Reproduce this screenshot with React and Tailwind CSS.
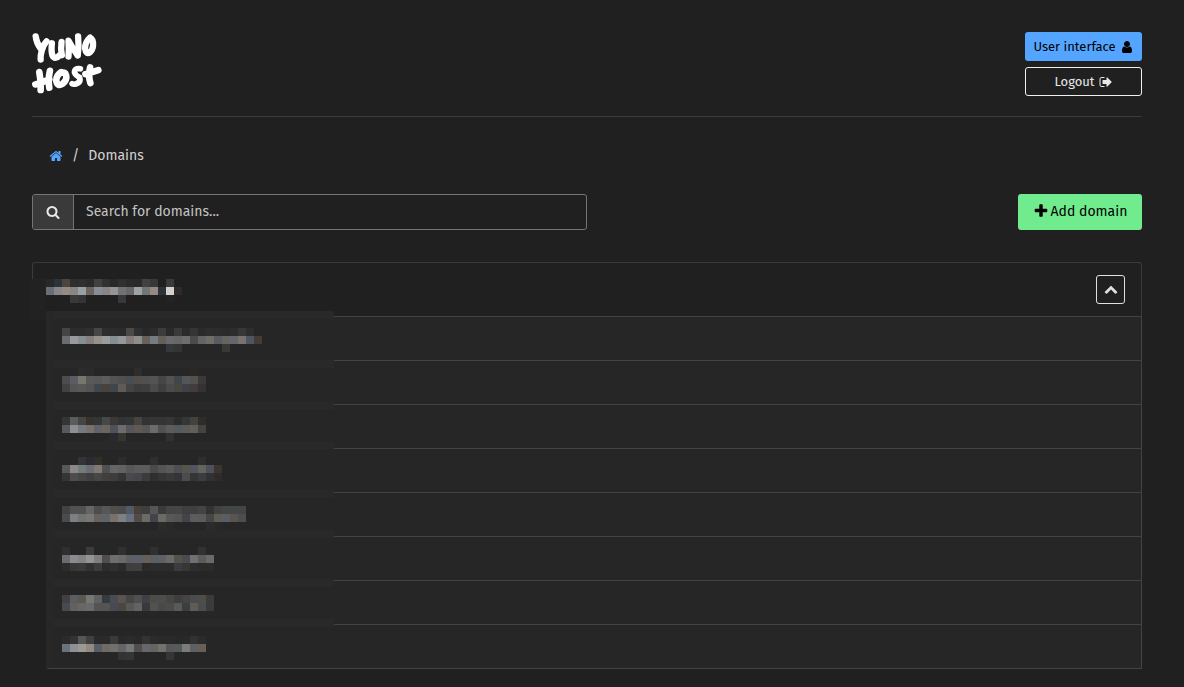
import clsx from 'clsx';

const ICONS = {
  home: 'M1472 992v480q0 26-19 45t-45 19h-384v-384h-256v384h-384q-26 0-45-19t-19-45v-480q0-1 .5-3t.5-3l575-474 575 474q1 2 1 6zm223-69l-62 74q-8 9-21 11h-3q-13 0-21-7l-692-577-692 577q-12 8-24 7-13-2-21-11l-62-74q-8-10-7-23.5t11-21.5l719-599q32-26 76-26t76 26l244 204v-195q0-14 9-23t23-9h192q14 0 23 9t9 23v408l219 182q10 8 11 21.5t-7 23.5z',
  search: 'M1216 832q0-185-131.500-316.500t-316.500-131.500-316.500 131.500-131.500 316.500 131.500 316.500 316.500 131.500 316.500-131.500 131.500-316.500zm512 832q0 52-38 90t-90 38q-54 0-90-38l-343-342q-179 124-399 124-143 0-273.500-55.500t-225-150-150-225-55.500-273.500 55.500-273.500 150-225 225-150 273.500-55.500 273.500 55.500 225 150 150 225 55.500 273.500q0 220-124 399l343 343q37 37 37 90z',
  plus: 'M1600 736v192q0 40-28 68t-68 28h-416v416q0 40-28 68t-68 28h-192q-40 0-68-28t-28-68v-416h-416q-40 0-68-28t-28-68v-192q0-40 28-68t68-28h416v-416q0-40 28-68t68-28h192q40 0 68 28t28 68v416h416q40 0 68 28t28 68z',
  chevronUp: 'M1683 1331l-166 165q-19 19-45 19t-45-19l-531-531-531 531q-19 19-45 19t-45-19l-166-165q-19-19-19-45.500t19-45.500l742-741q19-19 45-19t45 19l742 741q19 19 19 45.500t-19 45.500z',
  user: 'M1536 1399q0 109-62.500 187t-150.500 78h-854q-88 0-150.500-78t-62.500-187q0-85 8.500-160.500t31.500-152 58.500-131 94-89 134.500-34.500q131 128 313 128t313-128q76 0 134.500 34.500t94 89 58.500 131 31.500 152 8.500 160.500zm-256-887q0 159-112.500 271.500t-271.500 112.500-271.500-112.500-112.500-271.500 112.500-271.500 271.500-112.500 271.500 112.500 112.500 271.500z',
  signOut: 'M704 1440q0 4 1 20t.5 26.500-3 23.500-10 19.500-20.500 6.500h-320q-119 0-203.500-84.500t-84.500-203.500v-704q0-119 84.500-203.500t203.500-84.500h320q13 0 22.500 9.500t9.500 22.500q0 4 1 20t.5 26.500-3 23.500-10 19.500-20.500 6.500h-320q-66 0-113 47t-47 113v704q0 66 47 113t113 47h312l11.500 1 11.500 3 8 5.500 7 9 2 13.500zm928-544q0 26-19 45l-544 544q-19 19-45 19t-45-19-19-45v-288h-448q-26 0-45-19t-19-45v-384q0-26 19-45t45-19h448v-288q0-26 19-45t45-19 45 19l544 544q19 19 19 45z',
};

const Icon = ({ name, className }) => (
  <svg viewBox="0 0 1792 1792" fill="currentColor" aria-hidden="true" className={clsx('shrink-0', className)}>
    <path d={ICONS[name]} />
  </svg>
);

// Redacted names: rows of 8px cells, '-' leaves a cell empty
const MAIN_DOMAIN = {
  y: 16,
  rows: [
    '26282a 2e3337 4a4540 2e2e2e 303031 2b2b2b 404041 313131 292929 303030 2a2b2c 2a2a2a 404141 383838 - 3b3b3b',
    '6b6e76 85868c 968a82 868686 9a9fa4 6b6560 888c94 868686 959492 707276 66676b 9fa2a5 747575 968a80 2b323b d3d2ce 2f2a27',
    '- - - 393939 343434 - - - - 37383a 231f1d - - - - 232323',
  ],
};

const SUBDOMAINS = [
  {
    band: -5,
    y: 12,
    rows: [
      '454546 2c2c2c 2c2c2c 2e2e33 474743 2d2d2d 2c2c2c 2b2b2b 4b4846 2e2f31 292929 2c2c2c 3c3c3c 2a2a2a 3a3a3a 2b2b2b 353535 2a2a2a 2d2d2d 2b2c2e 2a2c29 2b2e2d 373735 2c2d2e',
      '6b6b70 989a99 878e92 877f7e 96928a 9b9c9e 888d91 93989d 857c79 8d8e8c 67625e 757b80 645f58 696a6e 676767 6e6e6c 4b4b4b 636467 706c68 595c5e 646460 65676c 78746d 4d5661 443b33',
      '- - - - - - - - - - - - - 35373a 343434 - - - - - 383836',
    ],
  },
  {
    band: 0,
    y: 8,
    rows: [
      '- - 2b2b2b 2a2a2a - - - - - 2d2d2d - - - - - - 2a2826',
      '4d4d50 5c5c62 797670 595959 575757 5c5c5e 535353 505050 4a4e53 534e4a 4e5150 535353 464646 525252 41464a 53555a 52514d 3c3a39',
      '424244 555555 585854 535353 41464b 47423e 424549 605b57 434445 3f3b38 3e3e3e 4b4b4b 3f3f3f 4b4b4b 484742 3e4246 423d3a 333333',
    ],
  },
  {
    band: -3,
    y: 13,
    rows: [
      '353535 5b5d5d 464543 35322f 353535 46484a 3c3836 323334 353535 47443f 323334 383434 353434 363636 2c2c2c 353638 43423e 2f2c2a',
      '59595b 8d8e91 757a7e 77716d 606468 6b645f 505259 6c6d6c 55555a 605951 565656 6a6c6c 515151 5b5a5d 545a5e 5b5b5b 625f58 434341',
      '- - - - - - 292a2e 35342f - - - - - 303131',
    ],
  },
  {
    band: -7,
    y: 9,
    rows: [
      '- - 333535 2b2c31 322e2a - - 2c2e2e - - - 2e2f2f - - - - - 2b2f2e',
      '575859 8b8885 747b7c 6b6d74 807872 505050 656565 626262 575757 5c5c5c 5c5c5d 4a4a4a 545454 5a5a5a 4e4f52 57534e 52555d 64645e 4e515b 3b3530',
      '353535 4d4d4d 464646 3f4042 454645 403f3a 3d3d3e 363430 474a4e 44464a 3d3b38 2f2f2f 343536 393939 343538 4b4c4d 363534 3b3e3c 303236 302b28',
    ],
  },
  {
    band: -3,
    y: 14,
    rows: [
      '404244 515151 515151 656565 504c4b 575757 514f4c 4c4c4c 515b67 484139 3e3e40 565656 3d3a39 454545 464643 3f3f3f 3d403f 444442 33322f 414141 444645 424646 424646',
      '4b4b4b 7b8084 707371 787773 68615f 5d6469 79716c 7d8180 667080 514c47 6b6a64 43434b 6a6962 585858 555555 434449 5a5c5d 5b5b5b 464645 5e5c55 5a5d62 5b534d 4d4f4e',
      '- - - - - - - - - - - - 2b2b2b 292929 - - - - 2a2b2c 292827',
    ],
  },
  {
    band: -6,
    y: 11,
    rows: [
      '2f2f2f - - 3c3c3c - - - 303030 - - - 303030 - - - - - 303131',
      '6c6c6e 868c92 868280 969492 7e7e7e 524d4b 6e6e6e 6a6a69 5c5f64 5b5f69 655e59 5c5f62 5e6163 6a6b67 52524f 494b50 6e7073 5f5b59 6a6b68',
      '2d2d2e 383838 3d3b39 303132 3f3d3b 2c2c2e 303030 292c2b 3e3e3e 404040 2a2a2a 2c2c2c 2b2c2e 2c2c2d 3b3c42 3a3532 2c2d2e 2c2b29 2b2b2a',
    ],
  },
  {
    band: -1,
    y: 15,
    rows: [
      '414141 5a5e62 5b5852 757775 616161 363b40 4a4c53 5b5350 464644 4f4f4f 404047 4d4c48 4b4d4e 484643 3e3e3e 444444 494b4d 4d4d49 3d3b39',
      '464b50 64605d 676767 6a6a69 555353 555450 484a51 4c4640 585858 636363 39383f 505250 4a4946 4c4c4a 555a5a 3c3d3f 5e5c54 484d4d 3a3a38',
    ],
  },
  {
    band: -5,
    y: 12,
    rows: [
      '2b2b2b 333333 575650 404040 2a2a2a 2a2a2a 3a3a3a 292929 2b2b2b 292929 333333 2b2b2b 292929 292929 282828 292929 323232 2b2b2b',
      '69737b 8e9095 9a9996 918a83 585d66 706a64 70706d 646464 727778 524e4c 66676a 646461 71716e 57575a 555a5d 7b7b79 5e6066 6a5f56',
      '- - - - - - - 333333 353535 - - - - 343635',
    ],
  },
];

const Mosaic = ({ x, y, rows }) =>
  rows.map((row, r) =>
    row.split(' ').map((color, c) =>
      color === '-' ? null : (
        <rect key={`${r}-${c}`} x={x + c * 8} y={y + r * 8} width="8" height="8" fill={`#${color}`} />
      )
    )
  );

const Logo = () => (
  <svg
    viewBox="36 36 214 190"
    role="img"
    aria-label="YunoHost"
    className="w-[71px] h-[63px]"
    fill="none"
    stroke="#fff"
    strokeLinecap="round"
    strokeLinejoin="round"
  >
    <g strokeWidth="19">
      <path d="M47 49Q49 68 62 86M80 64Q68 78 65 94Q61 108 62 119" />
      <path d="M96 70Q93 94 98 108Q106 121 121 104M125 66Q122 86 126 106" />
      <path d="M146 110Q148 88 146 62Q160 88 174 107Q178 76 175 49" />
      <path d="M211 53Q196 66 196 86Q199 106 211 97Q222 87 220 68Q217 51 208 57" />
    </g>
    <g strokeWidth="20">
      <path d="M58 157Q63 184 62 211M90 153Q84 178 88 204M46 194Q66 190 88 178" />
      <path d="M124 157Q109 166 109 183Q113 202 128 192Q142 182 139 167Q136 155 124 159" />
      <path d="M182 147Q164 144 164 158Q168 168 180 173Q184 187 170 192Q161 195 157 192" strokeWidth="17" />
      <path d="M211 143Q205 168 212 190M197 163Q218 157 236 151" />
    </g>
  </svg>
);

const Header = () => (
  <header className="flex items-start justify-between border-b border-[#3b3b3b] pb-5">
    <a href="#home">
      <Logo />
    </a>
    <div className="flex w-[117px] flex-col gap-1.5 text-[13px] leading-5">
      <a
        href="#sso"
        className="flex h-[29px] items-center justify-center gap-1 rounded-[3px] bg-[#54a5ff] text-black"
      >
        User interface
        <Icon name="user" className="size-3.5" />
      </a>
      <button
        type="button"
        className="flex h-[29px] items-center justify-center gap-1 rounded-[3px] border border-[#f0f0f0] text-[#e8e8e8]"
      >
        Logout
        <Icon name="signOut" className="size-3.5" />
      </button>
    </div>
  </header>
);

const Breadcrumb = () => (
  <nav aria-label="Breadcrumb" className="flex h-[77px] items-center gap-[9px] px-[17px] text-[14px] text-[#d3d3d3]">
    <a href="#home" aria-label="Home" className="text-[#54a5ff]">
      <Icon name="home" className="size-3.5" />
    </a>
    <span>/</span>
    <span>Domains</span>
  </nav>
);

const Toolbar = () => (
  <div className="flex items-center justify-between">
    <div className="flex h-9 w-1/2 overflow-hidden rounded-[3px] border border-[#757575]">
      <label
        htmlFor="domain-search"
        aria-label="Search"
        className="flex w-[41px] items-center justify-center border-r border-[#757575] bg-[#3a3a3a] text-[#e8e8e8]"
      >
        <Icon name="search" className="size-3.5" />
      </label>
      <input
        id="domain-search"
        type="text"
        placeholder="Search for domains..."
        className="min-w-0 flex-1 bg-transparent px-3 pb-0.5 text-[14px] text-[#d3d3d3] outline-none placeholder:text-[#c4c4c4]"
      />
    </div>
    <button
      type="button"
      className="flex h-9 w-[124px] items-center justify-center gap-0.5 rounded-[3px] bg-[#70ec8f] pb-0.5 text-[14px] text-black"
    >
      <Icon name="plus" className="size-4" />
      Add domain
    </button>
  </div>
);

const SubdomainRow = ({ domain }) => (
  <li className="flex h-11">
    <svg width="288" height="44" className="shrink-0 overflow-visible" aria-hidden="true">
      <rect y={domain.band} width="288" height={44 - domain.band} fill="#262626" />
      <rect y={domain.band} width="288" height="8" fill="#292929" />
      <rect y={domain.band} width="8" height={44 - domain.band} fill="#272727" />
      <Mosaic x={16} y={domain.y} rows={domain.rows} />
    </svg>
    <div className="flex-1 border-t border-r border-[#434343] bg-[#262626]" />
  </li>
);

const DomainList = () => (
  <section className="mt-8">
    <div className="flex h-[54px] justify-between rounded-t-[3px] border border-b-0 border-[#3b3b3b] pr-4">
      <svg width="160" height="53" className="shrink-0 overflow-visible" aria-hidden="true">
        <rect x="-3" y="16" width="16" height="40" fill="#222222" />
        <Mosaic x={13} y={MAIN_DOMAIN.y} rows={MAIN_DOMAIN.rows} />
      </svg>
      <button
        type="button"
        aria-label="Collapse"
        className="mt-3 flex size-[29px] items-center justify-center rounded-[3px] border border-[#e0e0e0] pb-0.5 text-[#e0e0e0]"
      >
        <Icon name="chevronUp" className="size-3.5" />
      </button>
    </div>
    <ul className="ml-3.5 rounded-bl-[3px] border-b border-[#434343]">
      {SUBDOMAINS.map((domain, idx) => (
        <SubdomainRow key={idx} domain={domain} />
      ))}
    </ul>
  </section>
);

const App = () => (
  <div className="min-h-screen bg-[#202020] pt-8 pr-[42px] pb-4 pl-8 font-['Fira_Sans','Noto_Sans',sans-serif]">
    <Header />
    <Breadcrumb />
    <main>
      <Toolbar />
      <DomainList />
    </main>
  </div>
);

export default App;
